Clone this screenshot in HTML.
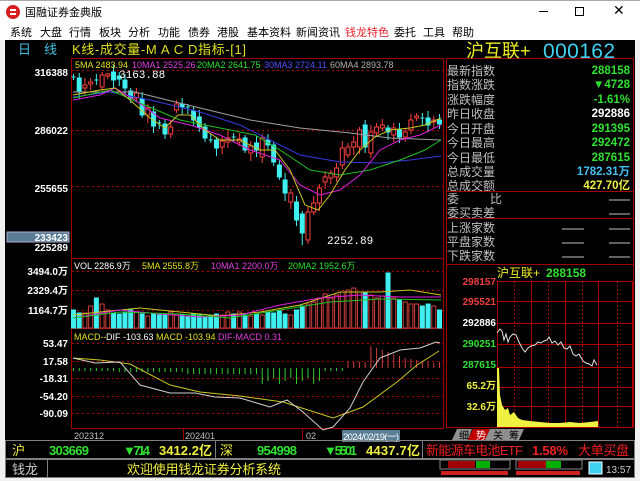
<!DOCTYPE html>
<html><head><meta charset="utf-8"><style>
*{margin:0;padding:0;box-sizing:border-box}
body{width:640px;height:481px;background:#f0f0f0;overflow:hidden;position:relative;font-family:"Liberation Sans","Noto Sans CJK SC",sans-serif}
.t{position:absolute;white-space:nowrap}
#title{position:absolute;left:0;top:0;width:640px;height:22px;background:#fff;border-top:1px solid #aaa}
#menu{position:absolute;left:0;top:22px;width:640px;height:18px;background:#fff;font-size:11px}
#menu span{position:absolute;top:2px;color:#000}
#blk{position:absolute;left:5px;top:40px;width:630px;height:438px;background:#000}
.cjk{font-family:"Liberation Sans","WenQuanYi Zen Hei","Noto Sans CJK SC",sans-serif}
</style></head><body>
<div id="title">
<div style="position:absolute;left:6px;top:4px;width:14px;height:14px;border-radius:7px;background:#d81e1e"></div>
<div style="position:absolute;left:10px;top:8px;width:6px;height:2px;background:#fff"></div>
<div style="position:absolute;left:10px;top:12px;width:6px;height:2px;background:#fff"></div>
<div class="t cjk" style="left:25px;top:3px;font-size:11px;color:#000">国融证券金典版</div>
<div class="t" style="left:539px;top:10px;width:9px;height:1px;background:#000"></div>
<div class="t" style="left:575px;top:6px;width:9px;height:9px;border:1px solid #000"></div>
<div class="t" style="left:613px;top:1px;font-size:14px;color:#000">✕</div>
</div>
<div id="menu" class="cjk">
<span style="left:10px">系统</span><span style="left:40px">大盘</span><span style="left:69px">行情</span><span style="left:99px">板块</span><span style="left:128px">分析</span><span style="left:158px">功能</span><span style="left:188px">债券</span><span style="left:217px">港股</span><span style="left:247px">基本资料</span><span style="left:296px">新闻资讯</span><span style="left:345px;color:#e8202a">钱龙特色</span><span style="left:394px">委托</span><span style="left:423px">工具</span><span style="left:452px">帮助</span>
</div>
<div id="blk"></div>
<svg id="sv" style="position:absolute;left:0;top:0" width="640" height="481" xmlns="http://www.w3.org/2000/svg" font-family="Liberation Sans, WenQuanYi Zen Hei, Noto Sans CJK SC, sans-serif">
<g fill="none" stroke="#a00000" stroke-width="1">
<rect x="71.5" y="58.5" width="372" height="370"/>
<line x1="71" y1="258.5" x2="444" y2="258.5"/>
<line x1="71" y1="328.5" x2="444" y2="328.5"/>
<rect x="446.5" y="58.5" width="187" height="369"/>
<line x1="446" y1="191.5" x2="634" y2="191.5"/>
<line x1="446" y1="218.5" x2="634" y2="218.5"/>
<line x1="446" y1="264.5" x2="634" y2="264.5"/>
<line x1="183.5" y1="429" x2="183.5" y2="440"/>
<line x1="302.5" y1="429" x2="302.5" y2="440"/>
</g>
<g stroke="#b00000" stroke-dasharray="2,3" stroke-width="1">
<line x1="72" y1="70.5" x2="443" y2="70.5"/><line x1="72" y1="130.5" x2="443" y2="130.5"/><line x1="72" y1="186.5" x2="443" y2="186.5"/>
<line x1="72" y1="271.5" x2="443" y2="271.5"/><line x1="72" y1="290.5" x2="443" y2="290.5"/><line x1="72" y1="310.5" x2="443" y2="310.5"/>
<line x1="72" y1="343.5" x2="443" y2="343.5"/><line x1="72" y1="361.5" x2="443" y2="361.5"/><line x1="72" y1="378.5" x2="443" y2="378.5"/><line x1="72" y1="396.5" x2="443" y2="396.5"/><line x1="72" y1="413.5" x2="443" y2="413.5"/>
</g>
<g id="cand"></g>
<g fill="none" stroke-width="1">
<polyline stroke="#a0a0a0" points="73,92 135,92 200,108 250,120 300,128 350,133 390,138 441,140"/>
<polyline stroke="#3838e0" points="73,97 110,92 150,100 200,112 240,125 270,140 300,155 340,162 380,163 410,160 441,156"/>
<polyline stroke="#20c020" points="73,98 110,90 140,103 180,120 220,128 255,135 280,150 310,170 340,175 370,170 400,160 425,150 441,140"/>
<polyline stroke="#e020e0" points="73,100 100,95 115,88 135,100 160,118 190,125 220,135 250,150 280,160 300,185 320,195 340,190 360,175 380,150 400,140 420,135 441,125"/>
<polyline stroke="#c8c820" points="73,95 100,90 115,88 130,100 150,118 165,128 178,115 190,115 205,130 220,140 240,140 260,150 275,150 290,170 305,205 318,210 330,195 345,170 360,150 375,137 390,130 410,128 425,125 441,118"/>
<polyline stroke="#c8c820" points="73,315 100,312 140,308 180,312 220,316 260,312 300,305 340,292 380,292 410,290 441,295"/>
<polyline stroke="#e020e0" points="73,318 120,310 160,314 200,317 240,315 280,305 320,298 360,295 400,297 441,297"/>
<polyline stroke="#20c020" points="73,318 120,312 180,314 230,318 280,310 330,302 380,299 441,300"/>
<polyline stroke="#c8c820" points="73,358 100,360 130,364 170,385 200,392 240,396 283,402 333,418 363,407 397,382 417,365 439,351"/>
<polyline stroke="#d0d0d0" points="73,358 95,363 120,362 140,385 170,393 195,393 215,397 240,398 270,407 287,400 303,412 323,430 333,427 350,408 363,382 380,358 400,350 420,348 436,342 440,343"/>
</g>
<g fill="#fff" font-size="11">
<text x="119" y="78" font-family="Liberation Mono, monospace">3163.88</text>
<text x="327" y="244" font-family="Liberation Mono, monospace">2252.89</text>
</g>
<g font-size="10" fill="#fff" text-anchor="end" font-weight="bold">
<text x="68" y="76">316388</text><text x="68" y="134">286022</text><text x="68" y="192">255655</text>
<rect x="7" y="232" width="62" height="10" fill="#5a7f95" stroke="#aac"/>
<text x="68" y="241">233423</text><text x="68" y="251">225289</text>
<text x="68" y="275">3494.0万</text><text x="68" y="294">2329.4万</text><text x="68" y="314">1164.7万</text>
<text x="68" y="347">53.47</text><text x="68" y="365">17.58</text><text x="68" y="382">-18.31</text><text x="68" y="400">-54.20</text><text x="68" y="417">-90.09</text>
</g>
<g font-size="9">
<text x="75" y="68" fill="#e0e020">5MA 2483.94</text><text x="132" y="68" fill="#e040e0">10MA1 2525.26</text><text x="197" y="68" fill="#30e030">20MA2 2641.75</text><text x="264" y="68" fill="#5050ff">30MA3 2724.11</text><text x="330" y="68" fill="#b0b0b0">60MA4 2893.78</text>
<text x="74" y="269" fill="#fff">VOL 2286.9万</text><text x="142" y="269" fill="#e0e020">5MA 2555.8万</text><text x="211" y="269" fill="#e040e0">10MA1 2200.0万</text><text x="288" y="269" fill="#30e030">20MA2 1952.6万</text>
<text x="74" y="340" fill="#e0e020">MACD--</text><text x="106" y="340" fill="#fff">DIF -103.63</text><text x="156" y="340" fill="#e0e020">MACD -103.94</text><text x="218" y="340" fill="#e040e0">DIF-MACD 0.31</text>
<text x="74" y="439" fill="#c0c0c0">202312</text><text x="185" y="439" fill="#c0c0c0">202401</text><text x="306" y="439" fill="#c0c0c0">02</text>
</g>
<rect x="342" y="430" width="58" height="12" fill="#5a7f95"/>
<text x="343" y="440" font-size="9.5" fill="#fff" textLength="56">2024/02/19(一)</text>
<text x="18" y="54" font-size="13" fill="#40c0e0">日</text><text x="44" y="54" font-size="13" fill="#40c0e0">线</text>
<text x="72" y="54" font-size="13" fill="#e0e020" textLength="174" lengthAdjust="spacing">K线-成交量-M A C D指标-[1]</text>
<text x="466" y="57" font-size="18" fill="#f0f020">沪互联+</text>
<text x="543" y="58" font-size="21" fill="#40d0f0" textLength="72">000162</text>
<g font-size="12" fill="#c0c0c0">
<text x="447" y="75">最新指数</text><text x="447" y="89">指数涨跌</text><text x="447" y="104">涨跌幅度</text><text x="447" y="118">昨日收盘</text><text x="447" y="133">今日开盘</text><text x="447" y="147">今日最高</text><text x="447" y="162">今日最低</text><text x="447" y="176">总成交量</text><text x="447" y="190">总成交额</text>
<text x="447" y="203">委</text><text x="490" y="203">比</text><text x="447" y="217">委买卖差</text>
<text x="447" y="232">上涨家数</text><text x="447" y="246">平盘家数</text><text x="447" y="260">下跌家数</text>
</g>
<g font-size="11.5" font-weight="bold" text-anchor="end">
<text x="630" y="74" fill="#30e030">288158</text><text x="630" y="88" fill="#30e030">▼4728</text><text x="630" y="103" fill="#30e030">-1.61%</text><text x="630" y="117" fill="#fff">292886</text><text x="630" y="132" fill="#30e030">291395</text><text x="630" y="146" fill="#30e030">292472</text><text x="630" y="161" fill="#30e030">287615</text><text x="630" y="175" fill="#40c0f0">1782.31万</text><text x="630" y="189" fill="#f0f040">427.70亿</text>
</g>
<g stroke="#c0c0c0"><line x1="609" y1="200" x2="630" y2="200"/><line x1="609" y1="214" x2="630" y2="214"/><line x1="562" y1="229" x2="584" y2="229"/><line x1="609" y1="229" x2="630" y2="229"/><line x1="562" y1="243" x2="584" y2="243"/><line x1="609" y1="243" x2="630" y2="243"/><line x1="562" y1="257" x2="584" y2="257"/><line x1="609" y1="257" x2="630" y2="257"/></g>
<text x="497" y="277" font-size="12" fill="#f0f020">沪互联+</text><text x="546" y="277" font-size="12" font-weight="bold" fill="#30e030">288158</text>
<g stroke="#b00000" fill="none"><rect x="497.5" y="281.5" width="135" height="146"/>
<line x1="497" y1="301.5" x2="632" y2="301.5"/><line x1="497" y1="323.5" x2="632" y2="323.5"/><line x1="497" y1="344.5" x2="632" y2="344.5"/><line x1="497" y1="367.5" x2="632" y2="367.5"/><line x1="497" y1="387.5" x2="632" y2="387.5"/><line x1="497" y1="406.5" x2="632" y2="406.5"/>
<line x1="531.5" y1="281" x2="531.5" y2="427"/><line x1="565.5" y1="281" x2="565.5" y2="427"/><line x1="598.5" y1="281" x2="598.5" y2="427"/>
<g stroke-dasharray="2,2"><line x1="514.5" y1="281" x2="514.5" y2="427"/><line x1="548.5" y1="281" x2="548.5" y2="427"/><line x1="582.5" y1="281" x2="582.5" y2="427"/><line x1="617.5" y1="281" x2="617.5" y2="427"/></g></g>
<polygon fill="#f0f040" points="497,427 497,368 499,368 500,395 502,405 505,410 508,408 510,415 514,412 518,418 522,420 530,421 540,422 550,423 560,423 570,422 580,423 590,422 598,421 598,427"/>
<polyline fill="none" stroke="#e0e0e0" points="497,333 500,329 502,331 504,340 506,334 508,342 510,337 513,334 516,335 519,342 522,348 525,352 528,348 531,346 535,345 538,342 541,343 544,341 547,340 549,337 552,343 555,341 558,345 561,342 564,348 567,349 570,346 573,354 576,356 579,354 583,361 586,363 589,364 592,366 594,360 597,365"/>
<g font-size="10" font-weight="bold" text-anchor="end">
<text x="496" y="285" fill="#f04040">298157</text><text x="496" y="305" fill="#f04040">295521</text><text x="496" y="326" fill="#fff">292886</text><text x="496" y="347" fill="#30e030">290251</text><text x="496" y="368" fill="#30e030">287615</text><text x="496" y="389" fill="#f0f040">65.2万</text><text x="496" y="410" fill="#f0f040">32.6万</text>
</g>
<g font-size="10"><polygon points="452,440 457,429 472,429 468,440" fill="#909090"/><text x="459" y="439" fill="#000">细</text>
<polygon points="468,440 473,429 490,429 485,440" fill="#c00000"/><text x="476" y="439" fill="#fff">势</text>
<polygon points="485,440 490,429 507,429 502,440" fill="#909090"/><text x="493" y="439" fill="#000">关</text>
<polygon points="502,440 507,429 524,429 519,440" fill="#909090"/><text x="509" y="439" fill="#000">筹</text></g>
<g stroke="#808080" fill="none"><rect x="5.5" y="440.5" width="629" height="18"/><line x1="215.5" y1="441" x2="215.5" y2="458"/><line x1="422.5" y1="441" x2="422.5" y2="458"/></g>
<g font-size="13" font-weight="bold">
<text x="12" y="455" fill="#f0f040" font-weight="normal">沪</text><text x="49" y="455" fill="#30e030" textLength="40">303669</text><text x="123" y="455" fill="#30e030" textLength="27">▼714</text><text x="159" y="455" fill="#f0f040" textLength="53">3412.2亿</text>
<text x="220" y="455" fill="#f0f040" font-weight="normal">深</text><text x="257" y="455" fill="#30e030" textLength="40">954998</text><text x="324" y="455" fill="#30e030" textLength="33">▼5501</text><text x="366" y="455" fill="#f0f040" textLength="54">4437.7亿</text>
<text x="426" y="455" fill="#f02020" font-weight="normal" textLength="97">新能源车电池ETF</text><text x="532" y="455" fill="#f02020" textLength="36">1.58%</text><text x="578" y="455" fill="#f02020" font-weight="normal" textLength="51">大单买盘</text>
</g>
<rect x="5.5" y="459.5" width="629" height="18" fill="none" stroke="#808080"/>
<line x1="47.5" y1="460" x2="47.5" y2="477" stroke="#808080"/>
<text x="12" y="474" font-size="13" fill="#d0d0d0">钱龙</text>
<text x="127" y="474" font-size="13" fill="#f0f040" textLength="154">欢迎使用钱龙证券分析系统</text>
<g><rect x="440" y="460" width="70" height="9" fill="#000" stroke="#888"/><rect x="448" y="461" width="27" height="7" fill="#a00000"/><rect x="476" y="461" width="14" height="7" fill="#00b000"/>
<rect x="516" y="460" width="66" height="9" fill="#000" stroke="#888"/><rect x="518" y="461" width="28" height="7" fill="#a00000"/><rect x="546" y="461" width="15" height="7" fill="#00b000"/>
<rect x="441" y="471" width="67" height="4" fill="#d02020"/><rect x="516" y="471" width="64" height="4" fill="#d02020"/>
<rect x="589" y="462" width="13" height="12" fill="#40d0f0" stroke="#fff"/>
<text x="606" y="473" font-size="10" fill="#d0d0d0">13:57</text></g>
</svg>
<script>
var C=[[77,77],[78,91],[88,85],[84,82],[80,80],[87,75],[76,74],[72,80],[76,79],[80,88],[91,98],[98,93],[99,115],[115,108],[112,126],[123,123],[124,134],[134,127],[110,104],[104,107],[107,107],[111,120],[117,127],[127,138],[140,140],[140,148],[147,141],[142,138],[137,137],[142,139],[138,150],[153,146],[143,150],[157,138],[140,145],[145,162],[165,177],[180,193],[202,193],[202,220],[214,233],[240,212],[212,203],[203,188],[182,177],[178,173],[177,168],[165,148],[155,147],[147,142],[147,130],[125,147],[153,132],[133,127],[128,125],[128,132],[135,128],[130,137],[137,132],[130,120],[118,116],[118,118],[118,125],[122,120],[120,124]];
var g=document.getElementById('cand'),N=C.length,s='',v='',m='';
for(var i=0;i<N;i++){var x=73.5+i*366/(N-1),o=C[i][0],c=C[i][1],up=c<o,t=Math.min(o,c),b=Math.max(o,c),h=t-3-(i*7%5),l=b+3+(i*5%6);
if(i==6)h=73;if(i==40)l=245;
var col=up?'#ff4040':'#40f0f0';
s+='<line x1="'+x+'" y1="'+h+'" x2="'+x+'" y2="'+l+'" stroke="'+col+'"/>';
if(b-t<1)s+='<line x1="'+(x-2)+'" y1="'+t+'" x2="'+(x+2)+'" y2="'+t+'" stroke="'+col+'"/>';
else s+='<rect x="'+(x-2)+'" y="'+t+'" width="4" height="'+(b-t)+'" fill="'+(up?'#000':col)+'" stroke="'+col+'"/>';
var vh=[18,15,15,22,30,24,18,15,14,16,18,16,14,12,14,13,13,16,14,13,12,14,13,12,12,14,13,16,14,16,13,12,14,13,16,15,17,14,13,18,22,24,26,30,34,30,33,36,38,40,36,35,33,30,32,55,30,28,26,24,24,22,24,22,18][i]||16;
v+='<rect x="'+(x-2)+'" y="'+(328-vh)+'" width="4" height="'+vh+'" fill="'+(up?'#000':col)+'" stroke="'+(up?'#d04040':col)+'"/>';
var mh=i<8?-3:i<20?-4:i<33?-6:i<44?-16+((i%3)*3):i<48?-3:i<52?6:i<58?22-(i-52)*2:i<64?10-(i-58):6;
if(mh<0)m+='<line x1="'+x+'" y1="368" x2="'+x+'" y2="'+(368-mh)+'" stroke="#30d030"/>';
else m+='<line x1="'+x+'" y1="368" x2="'+x+'" y2="'+(368-mh)+'" stroke="#d04040"/>';}
g.innerHTML=s+v+m;
</script>
</body></html>
